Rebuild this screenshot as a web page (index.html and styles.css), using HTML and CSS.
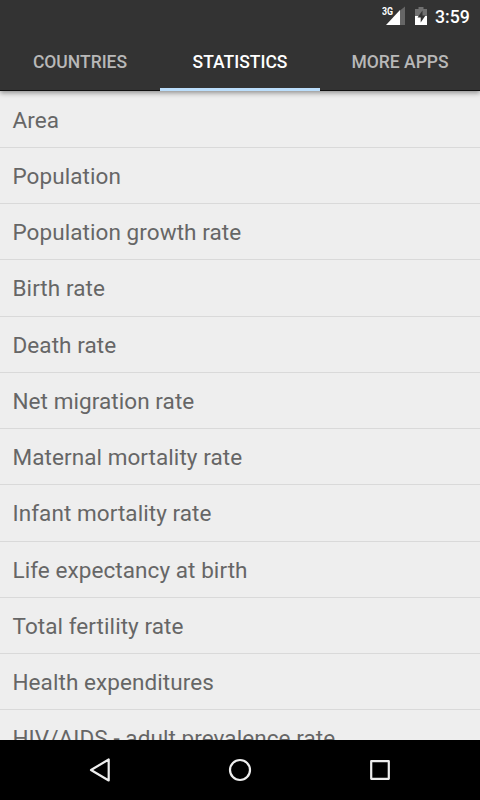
FILE: index.html
```html
<!DOCTYPE html>
<html lang="en">
<head>
<meta charset="utf-8">
<title>Statistics</title>
<link rel="stylesheet" href="styles.css">
</head>
<body>
<header class="top">
  <div class="status">
    <svg class="status-icons" width="50" height="32" viewBox="380 0 50 32">
      <path d="M400 10.500L405 6.500V25h-5z" fill="#666"/>
      <path d="M386 25L400 10V25Z" fill="#fff"/>
      <path d="M415 9h3.500V7h5v2h3.500v16h-12z" fill="#707070"/>
      <path d="M415 16h12v9h-12z" fill="#fff"/>
      <path d="M422.500 10.500l-5 7h3.200v5l4.800-7h-3z" fill="#333"/>
    </svg>
    <span class="network">3G</span>
    <span class="clock">3:59</span>
  </div>
  <nav class="tabs">
    <div class="tab">COUNTRIES</div>
    <div class="tab active">STATISTICS</div>
    <div class="tab">MORE APPS</div>
  </nav>
</header>
<main class="list">
  <div class="row">Area</div>
  <div class="row">Population</div>
  <div class="row">Population growth rate</div>
  <div class="row">Birth rate</div>
  <div class="row">Death rate</div>
  <div class="row">Net migration rate</div>
  <div class="row">Maternal mortality rate</div>
  <div class="row">Infant mortality rate</div>
  <div class="row">Life expectancy at birth</div>
  <div class="row">Total fertility rate</div>
  <div class="row">Health expenditures</div>
  <div class="row">HIV/AIDS - adult prevalence rate</div>
</main>
<footer class="navbar">
  <svg width="480" height="60" viewBox="0 740 480 60" fill="none" stroke="#eee" stroke-width="2.200">
    <path d="M108.700 759.500V780.500L91 770Z" stroke-linejoin="round"/>
    <circle cx="240" cy="770" r="10"/>
    <path d="M371.200 761.200h17.600v17.600h-17.600z" stroke-linejoin="round"/>
  </svg>
</footer>
</body>
</html>
```

FILE: styles.css
```css
* { box-sizing: border-box; }
body {
  margin: 0;
  width: 480px;
  height: 800px;
  overflow: hidden;
  display: flex;
  flex-direction: column;
  background: #eee;
  font-family: Roboto, sans-serif;
}
.top {
  height: 91px;
  flex: none;
  background: #333;
  position: relative;
  z-index: 1;
  box-shadow: 0 2px 5px rgba(0, 0, 0, .4);
}
.status {
  height: 33px;
  display: flex;
  justify-content: flex-end;
  padding-right: 10px;
  color: #fff;
  position: relative;
}
.clock {
  width: 35px;
  font-size: 17.7px;
  font-weight: 500;
  line-height: 34px;
  white-space: nowrap;
}
.status-icons { margin-right: 5px; }
.network {
  position: absolute;
  left: 382px;
  top: 6px;
  font-size: 10px;
  line-height: 12px;
  font-weight: 700;
  transform: scaleX(.88);
  transform-origin: left;
}
.tabs { display: flex; height: 58px; }
.tab {
  flex: 1;
  text-align: center;
  font-size: 17.5px;
  font-weight: 500;
  line-height: 59px;
  color: #b8b8b8;
  border-bottom: 1px solid #111;
}
.active { color: #fff; border-bottom: 3px solid #bbdefb; }
.list { flex: 1; min-height: 0; overflow: hidden; padding-top: .6px; }
.row {
  height: 56.25px;
  padding-left: 12.5px;
  border-bottom: 1px solid #d9d9d9;
  color: #666;
  font-size: 22.5px;
  letter-spacing: .07px;
  line-height: 56.6px;
  white-space: nowrap;
}
.navbar { height: 60px; flex: none; background: #000; position: relative; }
.navbar svg { display: block; }
```
